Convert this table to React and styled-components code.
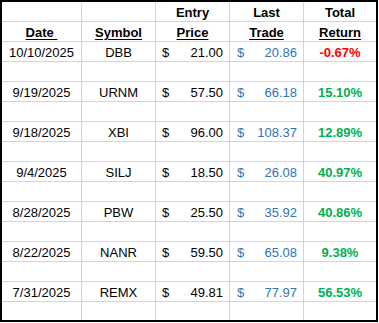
import React from "react";
import styled, { createGlobalStyle } from "styled-components";

const Global = createGlobalStyle`
  html, body { margin: 0; padding: 0; background: #ffffff; }
  body { font-family: "Liberation Sans", Arial, sans-serif; }
`;

const Sheet = styled.div`
  display: grid;
  grid-template-columns: 79px 73px 73px 73px 72px;
  grid-template-rows: repeat(15, 19px) 18px;
  gap: 1px;
  width: 374px;
  border: 2px solid #000;
  background: #d4d4d4;
  font-size: 13px;
  color: #000;
`;

const Cell = styled.div`
  background: #fff;
  box-sizing: border-box;
  padding-top: 2px;
  line-height: 17px;
  white-space: pre;
  text-align: center;
  font-weight: ${(p) => (p.$bold ? 700 : 400)};
  color: ${(p) => p.$color || "#000"};
`;

const Head = styled(Cell)`
  font-weight: 700;
`;

const Under = styled.span`
  text-decoration: underline;
  text-decoration-thickness: 1px;
  text-underline-offset: 2px;
`;

const Money = styled(Cell)`
  display: flex;
  justify-content: space-between;
  padding-left: ${(p) => p.$left || 6}px;
  padding-right: 6px;
`;

const rows = [
  ["10/10/2025", "DBB", "21.00", "20.86", "-0.67%"],
  ["9/19/2025", "URNM", "57.50", "66.18", "15.10%"],
  ["9/18/2025", "XBI", "96.00", "108.37", "12.89%"],
  ["9/4/2025", "SILJ", "18.50", "26.08", "40.97%"],
  ["8/28/2025", "PBW", "25.50", "35.92", "40.86%"],
  ["8/22/2025", "NANR", "59.50", "65.08", "9.38%"],
  ["7/31/2025", "REMX", "49.81", "77.97", "56.53%"],
];

const BLUE = "#2e75b6";
const RED = "#ff0000";
const GREEN = "#00b050";

export default function App() {
  return (
    <>
      <Global />
      <Sheet>
        <Head />
        <Head />
        <Head>Entry</Head>
        <Head>Last</Head>
        <Head>Total</Head>
        <Head><Under>{"Date\u00a0"}</Under></Head>
        <Head><Under>Symbol</Under></Head>
        <Head><Under>Price</Under></Head>
        <Head><Under>Trade</Under></Head>
        <Head><Under>Return</Under></Head>
        {rows.map((r) => (
          <React.Fragment key={r[0]}>
            <Cell>{r[0]}</Cell>
            <Cell>{r[1]}</Cell>
            <Money><span>$</span><span>{r[2]}</span></Money>
            <Money $left={7} $color={BLUE}><span>$</span><span>{r[3]}</span></Money>
            <Cell $bold $color={r[4].startsWith("-") ? RED : GREEN}>{r[4]}</Cell>
            <Cell />
            <Cell />
            <Cell />
            <Cell />
            <Cell />
          </React.Fragment>
        ))}
      </Sheet>
    </>
  );
}
